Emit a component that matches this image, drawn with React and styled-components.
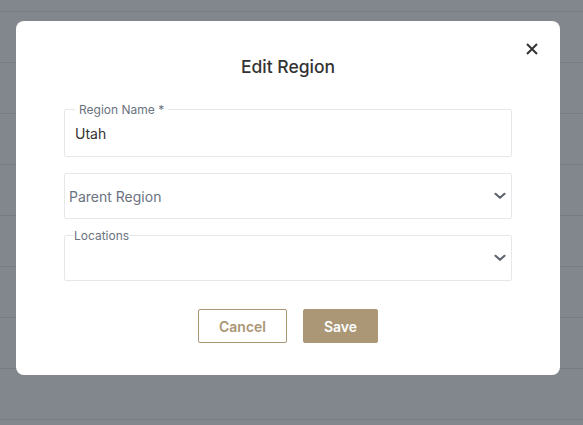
import React, { useState } from 'react';
import styled, { createGlobalStyle } from 'styled-components';

const GlobalStyle = createGlobalStyle`
  html, body {
    margin: 0;
    padding: 0;
    height: 100%;
    overflow: hidden;
  }
  body {
    font-family: Inter, "Noto Sans", sans-serif;
    background: #fff;
  }
`;

const Page = styled.div`
  position: relative;
  width: 583px;
  height: 425px;
  background: #f3f4f6;
  overflow: hidden;
`;

const TableRows = styled.div`
  display: flex;
  flex-direction: column;
  padding-top: 11px;
`;

const TableRow = styled.div`
  height: 50px;
  border-top: 1px solid #d8dade;
`;

const Backdrop = styled.div`
  position: absolute;
  inset: 0;
  background: rgba(55, 60, 72, 0.6);
  display: flex;
  justify-content: flex-start;
  align-items: flex-start;
  padding: 21px 0 0 16px;
`;

const Modal = styled.div`
  position: relative;
  width: 544px;
  height: 354px;
  box-sizing: border-box;
  background: #ffffff;
  border-radius: 8px;
  padding: 36px 48px 0;
  display: flex;
  flex-direction: column;
`;

const CloseButton = styled.button`
  position: absolute;
  top: 21px;
  right: 21px;
  width: 14px;
  height: 14px;
  padding: 0;
  border: 0;
  background: transparent;
  display: flex;
  align-items: center;
  justify-content: center;
  cursor: pointer;
  color: #333;
`;

const Title = styled.h2`
  margin: 0 0 32px;
  text-align: center;
  font-size: 17.5px;
  font-weight: 500;
  line-height: 20px;
  color: #333333;
`;

const Form = styled.div`
  display: flex;
  flex-direction: column;
  gap: 16px;
`;

const Field = styled.div`
  position: relative;
  height: ${p => p.$height}px;
  box-sizing: border-box;
  border: 1px solid #e5e7eb;
  border-radius: 2px;
  display: flex;
  align-items: center;
  padding: 0 5px 0 ${p => p.$padLeft ?? 10}px;
`;

const FloatLabel = styled.span`
  position: absolute;
  top: -7px;
  left: ${p => p.$left}px;
  padding: 0 ${p => p.$pad}px;
  background: #ffffff;
  font-size: 12px;
  line-height: 13px;
  color: #6b7280;
`;

const Value = styled.span`
  flex: 1;
  margin-top: 2px;
  font-size: 14px;
  line-height: 18px;
  color: ${p => (p.$placeholder ? '#6b7280' : '#333333')};
`;

const Chevron = styled.span`
  display: flex;
  align-items: center;
  color: #5f6470;
`;

const Actions = styled.div`
  display: flex;
  justify-content: center;
  gap: 16px;
  margin-top: 28px;
`;

const Button = styled.button`
  height: 34px;
  width: ${p => p.$width}px;
  box-sizing: border-box;
  border-radius: 2px;
  border: 1px solid #ab9675;
  background: ${p => (p.$primary ? '#ab9675' : '#ffffff')};
  color: ${p => (p.$primary ? '#ffffff' : '#ab9675')};
  font-family: Inter, "Noto Sans", sans-serif;
  font-size: 14px;
  font-weight: 600;
  cursor: pointer;
`;

function ChevronDown() {
  return (
    <svg width="12" height="8" viewBox="0 0 12 8" fill="none" stroke="currentColor" strokeWidth="2.2" strokeLinecap="round" strokeLinejoin="round">
      <path d="M1.5 1.8L6 5.8l4.5-4" />
    </svg>
  );
}

function CloseIcon() {
  return (
    <svg width="12" height="12" viewBox="0 0 12 12" fill="none" stroke="currentColor" strokeWidth="2">
      <path d="M1 1l10 10M11 1L1 11" />
    </svg>
  );
}

export default function App() {
  const [name] = useState('Utah');

  return (
    <>
      <GlobalStyle />
      <Page>
        <TableRows>
          {Array.from({ length: 9 }).map((_, i) => (
            <TableRow key={i} />
          ))}
        </TableRows>
        <Backdrop>
          <Modal>
            <CloseButton aria-label="Close">
              <CloseIcon />
            </CloseButton>
            <Title>Edit Region</Title>
            <Form>
              <Field $height={48}>
                <FloatLabel $left={10} $pad={4}>Region Name *</FloatLabel>
                <Value>{name}</Value>
              </Field>
              <Field $height={46} $padLeft={4}>
                <Value $placeholder>Parent Region</Value>
                <Chevron><ChevronDown /></Chevron>
              </Field>
              <Field $height={46}>
                <FloatLabel $left={9} $pad={0}>Locations</FloatLabel>
                <Value />
                <Chevron><ChevronDown /></Chevron>
              </Field>
            </Form>
            <Actions>
              <Button $width={89}>Cancel</Button>
              <Button $primary $width={75}>Save</Button>
            </Actions>
          </Modal>
        </Backdrop>
      </Page>
    </>
  );
}
